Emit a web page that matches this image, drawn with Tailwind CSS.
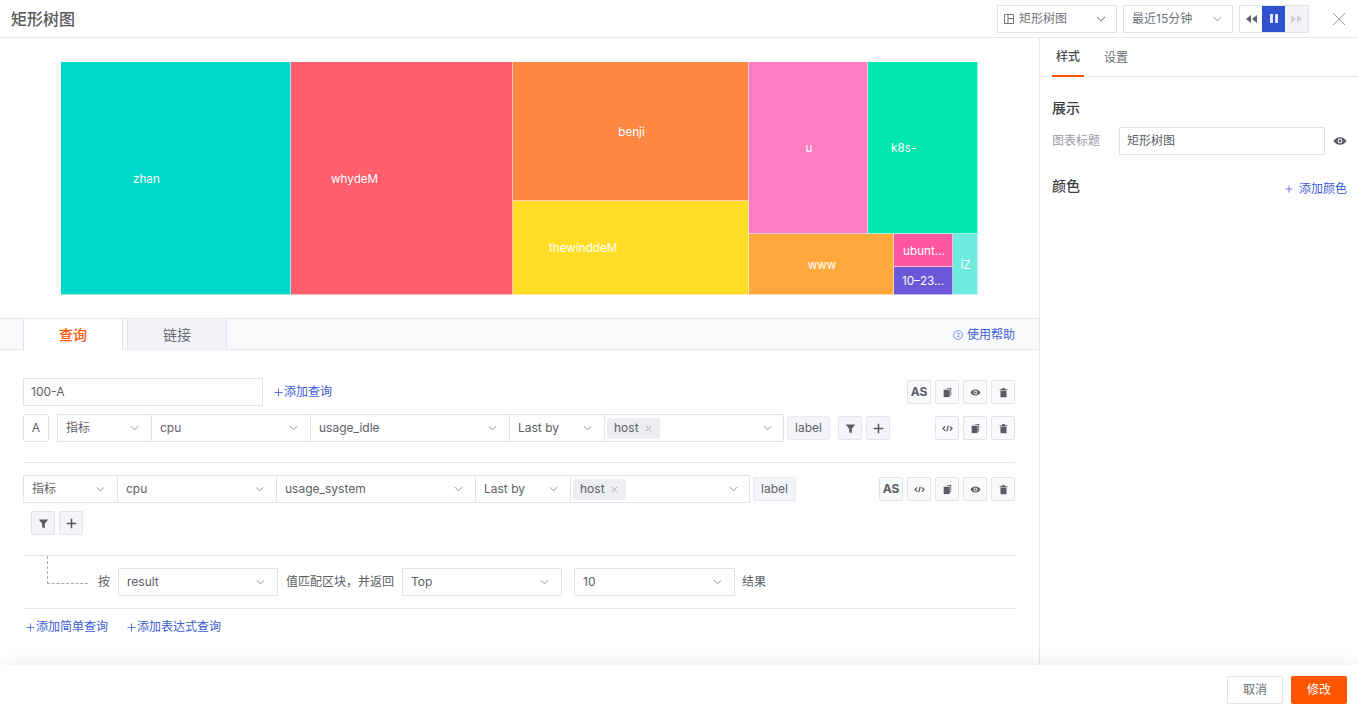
<!DOCTYPE html>
<html lang="zh">
<head>
<meta charset="utf-8">
<script src="https://cdn.jsdelivr.net/npm/@tailwindcss/browser@4"></script>
</head>
<body class="m-0 bg-white overflow-hidden font-['Inter','Noto_Sans_CJK_SC',sans-serif] text-[12px] text-[#5e6066]">
<svg class="hidden">
  <symbol id="chev" viewBox="0 0 10 6"><path d="M1 1l4 4 4-4" fill="none" stroke="#8e90a0" stroke-width="1.1"/></symbol>
  <symbol id="copy" viewBox="0 0 12 12"><path d="M1.800 3h6.600v8H1.800z" fill="#595b60"/><path d="M3.400 1.900L10 .8v8.600H9.100V2.200z" fill="#595b60"/></symbol>
  <symbol id="eye" viewBox="0 0 12 12"><path fill-rule="evenodd" d="M.5 6C1.600 4 3.600 2.800 6 2.800S10.400 4 11.500 6C10.400 8 8.400 9.200 6 9.200S1.600 8 .5 6zM6 3.900a2.100 2.100 0 1 0 0 4.200 2.100 2.100 0 0 0 0-4.200z" fill="#595b60"/><circle cx="6" cy="6" r="1.200" fill="#595b60"/></symbol>
  <symbol id="trash" viewBox="0 0 12 12"><path d="M1.800 2.400h8.400v1.100H1.800zM4.600 1.100h2.800v1.300H4.600zM2.700 4.200h6.600v7H2.700z" fill="#595b60"/></symbol>
  <symbol id="code" viewBox="0 0 12 12"><path d="M3.400 3.600L1 6l2.400 2.400M8.600 3.600L11 6 8.600 8.400M6.900 3L5.100 9" fill="none" stroke="#595b60" stroke-width="1.300"/></symbol>
  <symbol id="filter" viewBox="0 0 12 12"><path d="M.8 1.500h10.400L7.400 6.200V11L4.600 10.300V6.200z" fill="#595b60"/></symbol>
  <symbol id="plus" viewBox="0 0 12 12"><path d="M6 .8v10.400M.8 6h10.400" stroke="#595b60" stroke-width="1.700" fill="none"/></symbol>
  <symbol id="x" viewBox="0 0 8 8"><path d="M1 1l6 6M7 1L1 7" stroke="#a3a5ad" stroke-width="1"/></symbol>
  <symbol id="bplus" viewBox="0 0 10 10"><path d="M5 .5v9M.5 5h9" stroke="#3b5bd6" stroke-width=".9" fill="none"/></symbol>
</svg>

<header class="h-[38px] border-b border-[#e8e8ec] flex items-center">
  <h1 class="ml-[11px] text-[16px] leading-[38px] font-medium text-[#5a5b60]">矩形树图</h1>
  <div class="ml-auto flex items-center">
    <div class="w-[120px] h-[28px] border border-[#e1e3ea] flex items-center pl-[6px] pr-[10px]">
      <svg class="w-[10px] h-[10px] mr-[5px]" viewBox="0 0 10 10"><path d="M.5.500h9v9h-9zM4 .5v9M4 4.500h5.500" fill="none" stroke="#75777f" stroke-width="1"/></svg>
      <span class="text-[#70727a]">矩形树图</span>
      <svg class="ml-auto w-[10px] h-[6px]"><use href="#chev"/></svg>
    </div>
    <div class="ml-[6px] w-[110px] h-[28px] border border-[#e1e3ea] flex items-center pl-[8px] pr-[10px]">
      <span class="text-[#70727a]">最近15分钟</span>
      <svg class="ml-auto w-[9px] h-[6px]"><use href="#chev"/></svg>
    </div>
    <div class="ml-[6px] w-[70px] h-[28px] border border-[#e1e3ea] rounded-[2px] flex overflow-hidden">
      <div class="w-[22px] flex items-center justify-center"><svg class="w-[11px] h-[8px]" viewBox="0 0 11 8"><path d="M5 0v8L0 4zM11 0v8L6 4z" fill="#5c5e66"/></svg></div>
      <div class="w-[23px] bg-[#3152cf] flex items-center justify-center gap-[2px]"><span class="w-[3px] h-[9px] bg-white/85"></span><span class="w-[3px] h-[9px] bg-white/85"></span></div>
      <div class="flex-1 bg-[#f3f4f8] flex items-center justify-center"><svg class="w-[11px] h-[8px]" viewBox="0 0 11 8"><path d="M0 0v8l5-4zM6 0v8l5-4z" fill="#cfd1da"/></svg></div>
    </div>
    <svg class="ml-[23px] mr-[12px] w-[14px] h-[14px]" viewBox="0 0 14 14"><path d="M1 1l12 12M13 1L1 13" stroke="#9a9ca3" stroke-width="1"/></svg>
  </div>
</header>

<div class="flex h-[627px]">
  <main class="w-[1039px] shrink-0">
    <section class="h-[280px] pt-[23px] pl-[60px]">
      <div class="w-[918px] h-[234px] flex text-white text-[11.700px] border-l border-t border-white/60 [&_div]:border-r [&_div]:border-b [&_div]:border-white/60 [&_div]:flex [&_div]:items-center [&_div]:pt-[3px]">
        <div class="w-[230px] bg-[#00d8c9] pl-[72px]">zhan</div>
        <div class="w-[222px] bg-[#ff5e6c] pl-[40px]">whydeM</div>
        <section class="w-[236px] flex flex-col">
          <div class="h-[139px] bg-[#ff8845] justify-center pl-[2px]">benji</div>
          <div class="h-[94px] bg-[#ffdd26] pl-[36px]">thewinddeM</div>
        </section>
        <section class="w-[229px] flex flex-col">
          <section class="h-[172px] flex">
            <div class="w-[119px] bg-[#ff7ec3] justify-center pl-[2px]">u</div>
            <div class="w-[110px] bg-[#00e6ad] pl-[23px]">k8s-</div>
          </section>
          <section class="h-[61px] flex">
            <div class="w-[145px] bg-[#ffa93d] justify-center pl-[2px]">www</div>
            <section class="w-[59px] flex flex-col">
              <div class="h-[33px] bg-[#ff56a0] justify-center pl-[2px]">ubunt...</div>
              <div class="h-[28px] bg-[#6b58d8] justify-center">10–23...</div>
            </section>
            <div class="w-[25px] bg-[#6eeade] justify-center pl-[1px]">iZ</div>
          </section>
        </section>
      </div>
    </section>

    <nav class="h-[32px] bg-[#f9fafc] border-y border-[#e8e9ee] flex pl-[23px] relative">
      <div class="w-[100px] h-[31px] bg-white border-x border-[#e1e3ea] flex items-center justify-center text-[14px] font-medium text-[#ff5500] pb-px">查询</div>
      <div class="ml-[4px] w-[100px] h-[30px] bg-[#f3f4f9] border-x border-[#e1e3ea] flex items-center justify-center text-[14px] text-[#6a6c74]">链接</div>
      <div class="ml-auto mr-[24px] pt-[2px] flex items-center text-[#3b5bd6]">
        <svg class="w-[10px] h-[10px] mr-[4px]" viewBox="0 0 10 10"><circle cx="5" cy="5" r="4.400" fill="none" stroke="#5b78e0" stroke-width=".8"/><path d="M3.600 4c.2-1.400 2.800-1.400 2.800 0 0 1-1.400 1-2.400 2.600h2.600" fill="none" stroke="#5b78e0" stroke-width=".7"/></svg>
        使用帮助
      </div>
    </nav>

    <section class="pl-[23px]">
      <div class="w-[992px]">
        <div class="mt-[28px] h-[28px] flex items-center">
          <div class="w-[240px] h-[28px] border border-[#e1e3ea] pl-[7px] leading-[26px]">100-A</div>
          <div class="ml-[11px] flex items-center text-[#3b5bd6]"><svg class="w-[9px] h-[9px] mr-px"><use href="#bplus"/></svg>添加查询</div>
          <div class="ml-auto flex gap-[4px]">
            <button class="w-[24px] h-[24px] bg-[#f9fafc] border border-[#e1e3ea] rounded-[2px] flex items-center justify-center font-bold text-[12px]">AS</button>
            <button class="w-[24px] h-[24px] bg-[#f9fafc] border border-[#e1e3ea] rounded-[2px] flex items-center justify-center"><svg class="w-[11px] h-[11px]"><use href="#copy"/></svg></button>
            <button class="w-[24px] h-[24px] bg-[#f9fafc] border border-[#e1e3ea] rounded-[2px] flex items-center justify-center"><svg class="w-[11px] h-[11px]"><use href="#eye"/></svg></button>
            <button class="w-[24px] h-[24px] bg-[#f9fafc] border border-[#e1e3ea] rounded-[2px] flex items-center justify-center"><svg class="w-[11px] h-[11px]"><use href="#trash"/></svg></button>
          </div>
        </div>

        <div class="mt-[8px] h-[28px] flex items-center">
          <div class="w-[26px] h-[28px] border border-[#e1e3ea] rounded-[2px] flex items-center justify-center">A</div>
          <div class="ml-[8px] flex h-[28px] border border-[#e1e3ea]">
            <div class="w-[94px] flex items-center pl-[8px] pr-[12px] border-r border-[#e1e3ea]">指标<svg class="ml-auto w-[9px] h-[6px]"><use href="#chev"/></svg></div>
            <div class="w-[159px] flex items-center pl-[8px] pr-[12px] border-r border-[#e1e3ea]">cpu<svg class="ml-auto w-[9px] h-[6px]"><use href="#chev"/></svg></div>
            <div class="w-[199px] flex items-center pl-[8px] pr-[12px] border-r border-[#e1e3ea]">usage_idle<svg class="ml-auto w-[9px] h-[6px]"><use href="#chev"/></svg></div>
            <div class="w-[95px] flex items-center pl-[8px] pr-[12px] border-r border-[#e1e3ea]">Last by<svg class="ml-auto w-[9px] h-[6px]"><use href="#chev"/></svg></div>
            <div class="w-[178px] flex items-center pl-[2px] pr-[11px]"><span class="h-[21px] w-[53px] bg-[#eceef2] rounded-[3px] flex items-center pl-[7px]">host<svg class="ml-[6px] w-[7px] h-[7px]"><use href="#x"/></svg></span><svg class="ml-auto w-[9px] h-[6px]"><use href="#chev"/></svg></div>
          </div>
          <div class="ml-[3px] w-[43px] h-[24px] bg-[#f4f5f9] border border-[#e8e9ee] rounded-[2px] flex items-center justify-center">label</div>
          <button class="ml-[8px] w-[24px] h-[24px] bg-[#f4f5f9] border border-[#e1e3ea] rounded-[2px] flex items-center justify-center"><svg class="w-[11px] h-[11px]"><use href="#filter"/></svg></button>
          <button class="ml-[4px] w-[24px] h-[24px] bg-[#f4f5f9] border border-[#e1e3ea] rounded-[2px] flex items-center justify-center"><svg class="w-[11px] h-[11px]"><use href="#plus"/></svg></button>
          <div class="ml-auto flex gap-[4px]">
            <button class="w-[24px] h-[24px] bg-[#f9fafc] border border-[#e1e3ea] rounded-[2px] flex items-center justify-center"><svg class="w-[11px] h-[11px]"><use href="#code"/></svg></button>
            <button class="w-[24px] h-[24px] bg-[#f9fafc] border border-[#e1e3ea] rounded-[2px] flex items-center justify-center"><svg class="w-[11px] h-[11px]"><use href="#copy"/></svg></button>
            <button class="w-[24px] h-[24px] bg-[#f9fafc] border border-[#e1e3ea] rounded-[2px] flex items-center justify-center"><svg class="w-[11px] h-[11px]"><use href="#trash"/></svg></button>
          </div>
        </div>

        <div class="mt-[20px] border-t border-[#e5e6ea]"></div>

        <div class="mt-[12px] h-[28px] flex items-center">
          <div class="flex h-[28px] border border-[#e1e3ea]">
            <div class="w-[94px] flex items-center pl-[8px] pr-[12px] border-r border-[#e1e3ea]">指标<svg class="ml-auto w-[9px] h-[6px]"><use href="#chev"/></svg></div>
            <div class="w-[159px] flex items-center pl-[8px] pr-[12px] border-r border-[#e1e3ea]">cpu<svg class="ml-auto w-[9px] h-[6px]"><use href="#chev"/></svg></div>
            <div class="w-[199px] flex items-center pl-[8px] pr-[12px] border-r border-[#e1e3ea]">usage_system<svg class="ml-auto w-[9px] h-[6px]"><use href="#chev"/></svg></div>
            <div class="w-[95px] flex items-center pl-[8px] pr-[12px] border-r border-[#e1e3ea]">Last by<svg class="ml-auto w-[9px] h-[6px]"><use href="#chev"/></svg></div>
            <div class="w-[178px] flex items-center pl-[2px] pr-[11px]"><span class="h-[21px] w-[53px] bg-[#eceef2] rounded-[3px] flex items-center pl-[7px]">host<svg class="ml-[6px] w-[7px] h-[7px]"><use href="#x"/></svg></span><svg class="ml-auto w-[9px] h-[6px]"><use href="#chev"/></svg></div>
          </div>
          <div class="ml-[3px] w-[43px] h-[24px] bg-[#f4f5f9] border border-[#e8e9ee] rounded-[2px] flex items-center justify-center">label</div>
          <div class="ml-auto flex gap-[4px]">
            <button class="w-[24px] h-[24px] bg-[#f9fafc] border border-[#e1e3ea] rounded-[2px] flex items-center justify-center font-bold text-[12px]">AS</button>
            <button class="w-[24px] h-[24px] bg-[#f9fafc] border border-[#e1e3ea] rounded-[2px] flex items-center justify-center"><svg class="w-[11px] h-[11px]"><use href="#code"/></svg></button>
            <button class="w-[24px] h-[24px] bg-[#f9fafc] border border-[#e1e3ea] rounded-[2px] flex items-center justify-center"><svg class="w-[11px] h-[11px]"><use href="#copy"/></svg></button>
            <button class="w-[24px] h-[24px] bg-[#f9fafc] border border-[#e1e3ea] rounded-[2px] flex items-center justify-center"><svg class="w-[11px] h-[11px]"><use href="#eye"/></svg></button>
            <button class="w-[24px] h-[24px] bg-[#f9fafc] border border-[#e1e3ea] rounded-[2px] flex items-center justify-center"><svg class="w-[11px] h-[11px]"><use href="#trash"/></svg></button>
          </div>
        </div>
        <div class="mt-[8px] pl-[8px] flex gap-[4px]">
          <button class="w-[24px] h-[24px] bg-[#f4f5f9] border border-[#e1e3ea] rounded-[2px] flex items-center justify-center"><svg class="w-[11px] h-[11px]"><use href="#filter"/></svg></button>
          <button class="w-[24px] h-[24px] bg-[#f4f5f9] border border-[#e1e3ea] rounded-[2px] flex items-center justify-center"><svg class="w-[11px] h-[11px]"><use href="#plus"/></svg></button>
        </div>

        <div class="mt-[20px] h-[54px] border-y border-[#e5e6ea] flex items-center">
          <div class="ml-[24px] mr-[10px] -mt-[24px] w-[41px] h-[28px] border-l border-b border-dashed border-[#a9abb2]"></div>
          <span>按</span>
          <div class="ml-[8px] w-[160px] h-[28px] border border-[#e1e3ea] flex items-center pl-[8px] pr-[12px]">result<svg class="ml-auto w-[9px] h-[6px]"><use href="#chev"/></svg></div>
          <span class="ml-[8px] w-[108px] whitespace-nowrap">值匹配区块，并返回</span>
          <div class="ml-[8px] w-[160px] h-[28px] border border-[#e1e3ea] flex items-center pl-[8px] pr-[12px]">Top<svg class="ml-auto w-[9px] h-[6px]"><use href="#chev"/></svg></div>
          <div class="ml-[12px] w-[161px] h-[28px] border border-[#e1e3ea] flex items-center pl-[8px] pr-[12px]">10<svg class="ml-auto w-[9px] h-[6px]"><use href="#chev"/></svg></div>
          <span class="ml-[7px]">结果</span>
        </div>

        <div class="mt-[10px] pl-[3px] h-[16px] flex items-center text-[#3b5bd6]">
          <svg class="w-[9px] h-[9px] mr-px"><use href="#bplus"/></svg>添加简单查询
          <svg class="ml-[19px] w-[9px] h-[9px] mr-px"><use href="#bplus"/></svg>添加表达式查询
        </div>
      </div>
    </section>
  </main>

  <aside class="w-[319px] border-l border-[#e5e6ea]">
    <div class="h-[39px] border-b border-[#e8e9ee] flex pl-[12px]">
      <div class="w-[32px] h-[39px] border-b-2 border-[#ff5500] flex items-center justify-center font-medium text-[#4c4d52]">样式</div>
      <div class="ml-[16px] w-[32px] flex items-center justify-center text-[#6a6c74] pt-px">设置</div>
    </div>
    <div class="pl-[12px] pr-[11px]">
      <h2 class="mt-[21px] text-[14px] leading-[20px] font-medium text-[#3c3d42]">展示</h2>
      <div class="mt-[9px] flex items-center h-[28px]">
        <span class="w-[67px] text-[#9a9ca5]">图表标题</span>
        <div class="w-[206px] h-[28px] border border-[#e1e3ea] pl-[7px] flex items-center">矩形树图</div>
        <svg class="ml-[8px] w-[14px] h-[14px]"><use href="#eye"/></svg>
      </div>
      <div class="mt-[21px] flex items-start">
        <h2 class="text-[14px] leading-[20px] font-medium text-[#3c3d42]">颜色</h2>
        <div class="ml-auto mt-[4px] flex items-center text-[#3b5bd6]"><svg class="w-[8px] h-[8px] mr-[6px]"><use href="#bplus"/></svg>添加颜色</div>
      </div>
    </div>
  </aside>
</div>

<footer class="h-[49px] relative bg-white shadow-[0_-5px_12px_rgba(0,0,0,0.05)] flex items-center justify-end pr-[11px] gap-[8px]">
  <button class="w-[56px] h-[28px] border border-[#e1e3ea] rounded-[2px] bg-white text-[#6a6c74]">取消</button>
  <button class="w-[56px] h-[28px] rounded-[2px] bg-[#ff5500] text-white">修改</button>
</footer>
</body>
</html>
